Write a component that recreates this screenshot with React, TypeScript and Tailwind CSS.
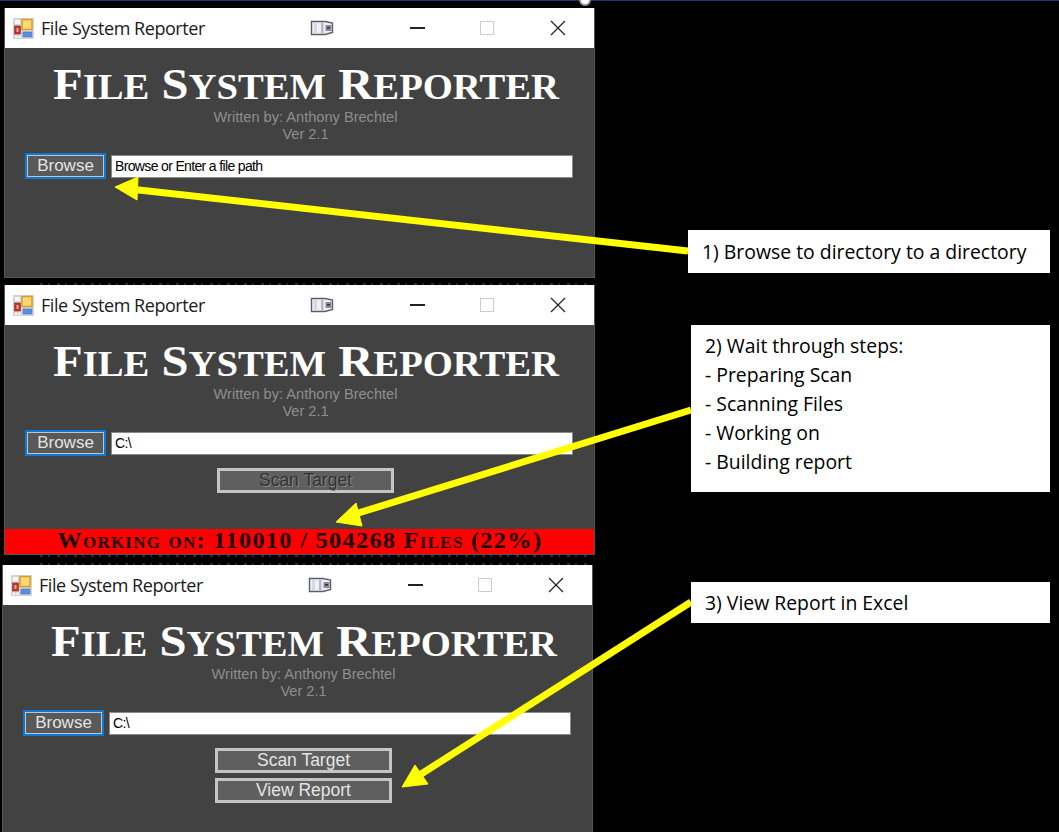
import React from 'react';

const AppIcon: React.FC = () => (
  <svg width="21" height="21" viewBox="0 0 21 21" className="shrink-0">
    <rect x="0" y="0" width="21" height="21" fill="#d4d4d4" />
    <rect x="2" y="2" width="5" height="4" fill="#f6f6f6" />
    <rect x="1.5" y="8" width="6" height="8" fill="#c0342c" stroke="#8e2a24" strokeWidth="0.6" />
    <rect x="3.5" y="10" width="2" height="4" fill="#e8a8a0" />
    <rect x="9" y="1.5" width="10" height="10" fill="#f8d878" stroke="#dc9c1c" strokeWidth="1.4" />
    <rect x="10" y="14" width="9" height="5" fill="#5a90e4" stroke="#3a6cc0" strokeWidth="0.5" />
    <rect x="2" y="17.5" width="2" height="2.5" fill="#f6f6f6" />
    <rect x="5.5" y="17.5" width="2" height="2.5" fill="#f6f6f6" />
  </svg>
);

const SnapIcon: React.FC = () => (
  <svg width="24" height="16" viewBox="0 0 24 16">
    <path d="M1.5 1.5 H15 L22.5 3 V12.5 L15 14.5 H1.5 Z" fill="#f0f0f4" stroke="#5c5c6c" strokeWidth="1.4" />
    <rect x="4" y="2.5" width="3" height="11" fill="#d8d8e0" />
    <rect x="11" y="2.5" width="2.5" height="11" fill="#b8b8c4" />
    <rect x="15.5" y="5" width="6" height="6" fill="#8a8a98" />
    <rect x="17" y="7" width="3" height="1.5" fill="#2c2c3a" />
  </svg>
);

const TitleBar: React.FC = () => (
  <div className="flex h-10 items-center bg-white pl-[8px] font-['Open_Sans',sans-serif] text-[18px] text-[#1a1a1a]">
    <AppIcon />
    <span className="ml-[7px] w-[269px] tracking-[-0.45px]">File System Reporter</span>
    <SnapIcon />
    <div className="ml-[76px] h-[1.5px] w-[15px] bg-[#222]" />
    <div className="ml-[55px] h-[14px] w-[14px] border border-[#ccc]" />
    <svg width="16" height="16" viewBox="0 0 16 16" className="ml-[56px]">
      <path d="M1 1 L15 15 M15 1 L1 15" stroke="#222" strokeWidth="1.2" />
    </svg>
  </div>
);

const FormButton: React.FC<{ label: string; disabled?: boolean }> = ({ label, disabled }) => (
  <div
    className={`flex h-[25px] w-[177px] items-center justify-center border-[3px] border-[#c4c4c4] bg-[#5f5f5f] text-[17.5px] ${
      disabled ? 'text-[#333] [text-shadow:1px_1px_0_#8a8a8a]' : 'text-[#e4e4e4]'
    }`}
  >
    {label}
  </div>
);

const Heading: React.FC = () => (
  <div className="mt-[14px] flex h-[46px] scale-x-[1.105] items-baseline gap-[11px] font-['Liberation_Serif',serif] leading-[46px] font-bold whitespace-nowrap text-white">
    {[
      ['F', 'ile'],
      ['S', 'ystem'],
      ['R', 'eporter'],
    ].map(([first, rest]) => (
      <span key={first}>
        <span className="text-[44px]">{first}</span>
        <span className="text-[35px] uppercase">{rest}</span>{' '}
      </span>
    ))}
  </div>
);

type WindowProps = {
  path: string;
  buttons?: { label: string; disabled?: boolean }[];
  status?: string;
  className?: string;
};

const ReporterWindow: React.FC<WindowProps> = ({ path, buttons = [], status, className = '' }) => (
  <div className={`flex w-[591px] flex-col border border-t-0 border-[#555] bg-[#424242] font-['Liberation_Sans',sans-serif] ${className}`}>
    <TitleBar />
    <div className="relative flex flex-1 flex-col items-center">
      <div className="ml-[12px] flex flex-col items-center">
        <Heading />
        <div className="mt-[1px] text-[14.6px] leading-[17px] text-[#8e8e8e]">Written by: Anthony Brechtel</div>
        <div className="text-[14.6px] leading-[17px] text-[#8e8e8e]">Ver 2.1</div>
      </div>
      <div className="mt-[10px] flex w-full items-center pl-[20px]">
        <div className="flex h-[26px] w-[81px] items-center justify-center border-2 border-[#0a78d8] bg-[#595959] text-[17px] text-[#e4e4e4] outline outline-1 -outline-offset-3 outline-[#c4c4c4]">
          Browse
        </div>
        <div className="ml-[5px] flex h-[23px] w-[462px] items-center border border-[#8a8a8a] bg-white pl-[3px] text-[14px] tracking-[-0.65px] text-black">
          {path}
        </div>
      </div>
      <div className="mt-[12px] ml-[12px] flex flex-col gap-[5px]">
        {buttons.map((b) => (
          <FormButton key={b.label} label={b.label} disabled={b.disabled} />
        ))}
      </div>
      {status && (
        <div className="absolute right-0 bottom-0 left-0 flex h-[25px] items-center justify-center bg-[#ff0000] font-['Liberation_Serif',serif] text-[23px] font-bold text-[#1a0000] [font-variant:small-caps]">
          <span className="-mt-[1px] scale-x-[1.06] tracking-[1.2px] whitespace-nowrap">{status}</span>
        </div>
      )}
    </div>
  </div>
);

// leftovers of the desktop behind the windows
const BackdropStrip: React.FC<{ className?: string }> = ({ className = '' }) => (
  <div className={`ml-[40px] h-[2px] w-[550px] bg-[repeating-linear-gradient(90deg,#4a2014_0_3px,transparent_3px_8px,#1c2450_8px_10px,transparent_10px_17px)] ${className}`} />
);

const Callout: React.FC<{ lines: string[]; className: string }> = ({ lines, className }) => (
  <div className={`absolute flex flex-col justify-center bg-white font-['Open_Sans',sans-serif] text-[19.4px] leading-[29px] text-black ${className}`}>
    {lines.map((line) => (
      <div key={line}>{line}</div>
    ))}
  </div>
);

export default function App() {
  return (
    <div className="relative h-[832px] w-[1059px] overflow-hidden bg-black">
      <div className="h-[1px] w-full bg-[#1c3a78]" />
      <div className="absolute -top-[6px] left-[579px] h-[12px] w-[12px] rounded-full border-2 border-[#999] bg-white" />

      <div className="flex flex-col pt-[7px]">
        <ReporterWindow path="Browse or Enter a file path" className="ml-[4px] h-[270px]" />
        <BackdropStrip className="mt-[5px]" />
        <ReporterWindow
          path="C:\"
          buttons={[{ label: 'Scan Target', disabled: true }]}
          status="Working on: 110010 / 504268 Files (22%)"
          className="ml-[4px] h-[270px]"
        />
        <BackdropStrip />
        <BackdropStrip className="mt-[6px]" />
        <ReporterWindow
          path="C:\"
          buttons={[{ label: 'Scan Target' }, { label: 'View Report' }]}
          className="ml-[2px] h-[270px]"
        />
      </div>

      <svg width="1059" height="832" className="pointer-events-none absolute top-0 left-0">
        <g fill="#ffff00" stroke="#ffff00">
          <path d="M688 251 L130 189" strokeWidth="7" />
          <path d="M115 187 L138 177 L137 200 Z" />
          <path d="M691 410 L352 515" strokeWidth="7" />
          <path d="M336 522 L356 503 L362 526 Z" />
          <path d="M691 602 L418 776" strokeWidth="7" />
          <path d="M402 787 L415 765 L428 784 Z" />
        </g>
      </svg>

      <Callout lines={['1) Browse to directory to a directory']} className="top-[230px] left-[688px] h-[43px] w-[362px] pl-[14px]" />
      <Callout
        lines={['2) Wait through steps:', '- Preparing Scan', '- Scanning Files', '- Working on', '- Building report']}
        className="top-[325px] left-[691px] h-[167px] w-[359px] pb-[10px] pl-[14px]"
      />
      <Callout lines={['3) View Report in Excel']} className="top-[582px] left-[691px] h-[41px] w-[359px] pl-[14px]" />
    </div>
  );
}
